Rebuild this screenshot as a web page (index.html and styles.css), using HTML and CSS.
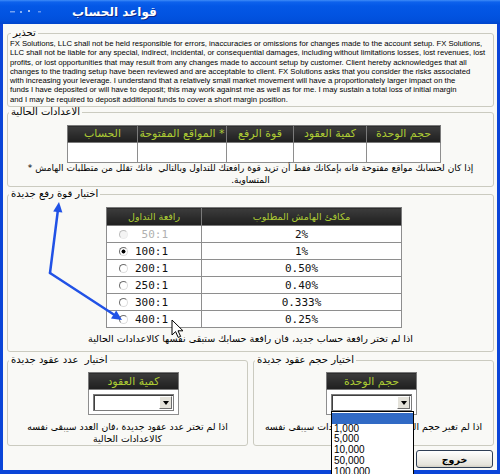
FILE: index.html
```html
<!DOCTYPE html>
<html lang="ar">
<head>
<meta charset="utf-8">
<title>قواعد الحساب</title>
<link rel="stylesheet" href="styles.css">
</head>
<body>
<div class="window">
  <div class="titlebar">
    <span class="app-icon">
      <svg width="36" height="8" viewBox="0 0 36 8"><rect x="2" y="3" width="5" height="1.5" fill="#8fb4f5"/><rect x="12" y="3" width="2" height="2" fill="#a9c6f7"/><rect x="20" y="2" width="2" height="2" fill="#c8dafa"/><rect x="30" y="3" width="3" height="1.5" fill="#7ea6f2"/></svg>
    </span>
    <span class="title">قواعد الحساب</span>
  </div>
  <div class="frame">
    <fieldset class="group warn">
      <legend>تحذير</legend>
      <p class="disclaimer">FX Solutions, LLC shall not be held responsible for errors, inaccuracies or omissions for changes made to the account setup. FX Solutions,<br>LLC shall not be liable for any special, indirect, incidental, or consequential damages, including without limitations losses, lost revenues, lost<br>profits, or lost opportunities that may result from any changes made to account setup by customer. Client hereby acknowledges that all<br>changes to the trading setup have been reviewed and are acceptable to client. FX Solutions asks that you consider the risks associated<br>with increasing your leverage. I understand that a relatively small market movement will have a proportionately larger impact on the<br>funds I have deposited or will have to deposit; this may work against me as well as for me. I may sustain a total loss of initial margin<br>and I may be required to deposit additional funds to cover a short margin position.</p>
    </fieldset>

    <fieldset class="group current">
      <legend>الاعدادات الحالية</legend>
      <table class="grid cur-table" dir="rtl">
        <tr class="head">
          <th class="w-unit">حجم الوحدة</th>
          <th class="w-qty">كمية العقود</th>
          <th class="w-lev">قوة الرفع</th>
          <th class="w-open">* المواقع المفتوحة</th>
          <th class="w-acc">الحساب</th>
        </tr>
        <tr class="cur-row"><td></td><td></td><td></td><td></td><td></td></tr>
      </table>
      <p class="note note-cur" dir="rtl">إذا كان لحسابك مواقع مفتوحة فانه بإمكانك فقط أن تزيد قوة رافعتك للتداول وبالتالي&nbsp; فانك تقلل من متطلبات الهامش *<br>المتساوية.</p>
    </fieldset>

    <fieldset class="group leverage">
      <legend>اختيار قوة رفع جديدة</legend>
      <table class="grid lev-table" dir="rtl">
        <tr class="head">
          <th class="w-margin">مكافئ الهامش المطلوب</th>
          <th class="w-ratio">رافعة التداول</th>
        </tr>
        <tr><td class="pct">2%</td><td class="ratio"><label class="opt off"><input type="radio" name="lev" disabled><span>&nbsp;50:1</span></label></td></tr>
        <tr><td class="pct">1%</td><td class="ratio"><label class="opt"><input type="radio" name="lev" checked><span>100:1</span></label></td></tr>
        <tr><td class="pct">0.50%</td><td class="ratio"><label class="opt"><input type="radio" name="lev"><span>200:1</span></label></td></tr>
        <tr><td class="pct">0.40%</td><td class="ratio"><label class="opt"><input type="radio" name="lev"><span>250:1</span></label></td></tr>
        <tr><td class="pct">0.333%</td><td class="ratio"><label class="opt"><input type="radio" name="lev"><span>300:1</span></label></td></tr>
        <tr><td class="pct">0.25%</td><td class="ratio"><label class="opt"><input type="radio" name="lev"><span>400:1</span></label></td></tr>
      </table>
      <p class="note note-lev" dir="rtl">اذا لم تختر رافعة حساب جديد، فان رافعة حسابك ستبقى نفسها كالاعدادات الحالية</p>
    </fieldset>

    <div class="bottom-row">
      <fieldset class="group small qty">
        <legend>اختيار&nbsp; عدد عقود جديدة</legend>
        <table class="grid pick-table" dir="rtl">
          <tr class="head"><th>كمية العقود</th></tr>
          <tr><td class="pick-cell"><div class="combo"><span class="combo-btn"></span></div></td></tr>
        </table>
        <p class="note" dir="rtl">اذا لم تختر عدد عقود جديدة ،فان العدد سيبقى نفسه<br>كالاعدادات الحالية</p>
      </fieldset>
      <fieldset class="group small unit">
        <legend>اختيار حجم عقود جديدة</legend>
        <table class="grid pick-table" dir="rtl">
          <tr class="head"><th>حجم الوحدة</th></tr>
          <tr><td class="pick-cell">
            <div class="combo open"><span class="combo-btn"></span>
              <ul class="combo-list">
                <li class="sel">&nbsp;</li>
                <li>1,000</li>
                <li>5,000</li>
                <li>10,000</li>
                <li>50,000</li>
                <li>100,000</li>
              </ul>
            </div>
          </td></tr>
        </table>
        <p class="note" dir="rtl">اذا لم تغير حجم الوحدة، فان حجم الوحدات سيبقى نفسه<br>كالاعدادات الحالية</p>
      </fieldset>
    </div>

    <div class="actions"><button class="btn" type="button">خروج</button></div>
  </div>

  <svg class="annot" width="500" height="474" viewBox="0 0 500 474">
    <g stroke="#2152E6" stroke-width="2.5" stroke-linecap="round" fill="none">
      <line x1="50" y1="273" x2="57.8" y2="211"/>
      <line x1="50" y1="273" x2="113" y2="314"/>
    </g>
    <g fill="#2152E6">
      <polygon points="59,202 62.4,212.6 53.2,211.4"/>
      <polygon points="122,320 111,318.4 116.2,310.6"/>
    </g>
  </svg>
  <svg class="cursor" width="14" height="20" viewBox="0 0 14 20">
    <path d="M1 1 L1 16 L4.6 12.6 L7.2 18.4 L9.6 17.4 L7 11.8 L12 11.8 Z" fill="#fff" stroke="#000" stroke-width="1" stroke-linejoin="miter"/>
  </svg>
</div>
</body>
</html>
```

FILE: styles.css
```css
* { box-sizing: border-box; }
html, body { margin: 0; padding: 0; }
body {
  width: 500px;
  height: 474px;
  overflow: hidden;
  background: #fff;
  font-family: "DejaVu Sans", sans-serif;
  color: #000;
}
.window {
  position: relative;
  width: 500px;
  height: 474px;
}
.titlebar {
  height: 24px;
  display: flex;
  align-items: center;
  padding-left: 8px;
  background: linear-gradient(#3F8CF7 0, #0E62EC 2px, #0458E6 6px, #0254E2 14px, #0150DC 20px, #0045CC 24px);
}
.app-icon { display: flex; width: 36px; height: 8px; opacity: .8; }
.title {
  margin-left: 28px;
  color: #fff;
  font-weight: bold;
  font-size: 12px;
  line-height: 14px;
  text-shadow: 1px 1px 0 #0a2a8a;
}
.frame {
  height: 450px;
  border: solid #0B45D8;
  border-width: 0 3px 4px 3px;
  background: #F9F9F6;
  padding: 4px 3px 0 4px;
  display: flex;
  flex-direction: column;
}
.group {
  margin: 0;
  min-width: 0;
  border: 1px solid #CBCBC0;
  border-radius: 3px;
  padding: 0;
}
.group legend {
  padding: 0 2px;
  margin-left: 1px;
  font-size: 10px;
  line-height: 10px;
  height: 10px;
  white-space: nowrap;
}
.warn { padding: 1px 0 2px 2px; }
.disclaimer {
  margin: 0;
  font-family: "Liberation Sans", Arial, sans-serif;
  font-size: 7.7px;
  line-height: 9.3px;
  white-space: nowrap;
}
.current { margin-top: 0; padding: 8px 0 0 0; }
.leverage { margin-top: 2px; padding: 8px 0 6px 0; }

.grid {
  border-collapse: collapse;
  border: 1px solid #6E6E6E;
}
.grid th {
  background: linear-gradient(#3C3C3C, #2A2A2A 60%, #1F1F1F);
  color: #ADCC34;
  font-weight: normal;
  border: 1px solid #7A7A7A;
  padding: 0;
  white-space: nowrap;
  text-align: center;
}
.grid td {
  background: #fff;
  border: 1px solid #8E8E8E;
  padding: 0;
}
.cur-table { margin: 0 52px 0 auto; }
.cur-table th { height: 17px; font-size: 11px; line-height: 14px; }
.cur-row td { height: 20px; }
.w-unit { width: 74px; }
.w-qty { width: 73px; }
.w-lev { width: 67px; }
.w-open { width: 89px; }
.w-acc { width: 70px; }

.note {
  margin: 0;
  text-align: center;
  font-size: 9px;
  line-height: 12px;
  white-space: nowrap;
}
.note-cur { line-height: 11.5px; }
.note-lev { margin-top: 5px; font-size: 9.6px; }

.lev-table { margin: 0 91px 0 auto; }
.lev-table th { height: 18px; font-size: 9.5px; }
.lev-table td { height: 17px; }
.w-margin { width: 200px; }
.w-ratio { width: 95px; }
.pct {
  text-align: center;
  font-family: "DejaVu Sans Mono", monospace;
  font-size: 11px;
  color: #111;
}
.ratio { direction: ltr; text-align: left; padding-left: 11px !important; }
.opt {
  display: flex;
  align-items: center;
  font-family: "DejaVu Sans Mono", monospace;
  font-size: 11px;
  color: #111;
}
.opt input {
  appearance: none;
  -webkit-appearance: none;
  width: 9px;
  height: 9px;
  margin: 0 7px 0 1px;
  border-radius: 50%;
  border: 1px solid;
  border-color: #6F6F6F #DCDCDC #DCDCDC #6F6F6F;
  background: #fff;
}
.opt input:checked {
  background: radial-gradient(circle, #000 0 1.7px, #fff 2.3px);
}
.opt.off { color: #B0B0B0; }
.opt.off input { border-color: #BDBDBD #ECECEC #ECECEC #BDBDBD; background: #F4F4F4; }

.bottom-row {
  display: flex;
  gap: 5px;
  margin-top: 3px;
}
.small { flex: 1; padding: 7px 0 0 0; }
.small .note { margin-top: 6px; font-size: 9.3px; }
.pick-table th { width: 90px; height: 17px; font-size: 11px; }
.qty .pick-table { margin-left: 80px; }
.unit .pick-table { margin-left: 72px; }
.pick-cell { height: 24px; padding: 4px 4px 3px 4px !important; }
.combo {
  position: relative;
  height: 17px;
  background: #fff;
  border: 1px solid #7C7C7C;
  box-shadow: inset 1px 1px 0 #3F3F3F;
}
.combo-btn {
  position: absolute;
  right: 1px;
  top: 1px;
  width: 13px;
  height: 13px;
  background: #E4E2DA;
  border: 1px solid;
  border-color: #fff #6E6E6E #6E6E6E #fff;
}
.combo-btn::after {
  content: "";
  position: absolute;
  left: 3px;
  top: 4px;
  border-style: solid;
  border-width: 4px 3px 0 3px;
  border-color: #000 transparent transparent transparent;
}
.combo-list {
  position: absolute;
  left: -1px;
  top: 16px;
  width: 83px;
  margin: 0;
  padding: 1px 0 0 0;
  list-style: none;
  background: #fff;
  border: 1px solid #000;
  z-index: 5;
  direction: ltr;
  text-align: left;
  font-family: "Liberation Sans", Arial, sans-serif;
  font-size: 10px;
  line-height: 10.7px;
}
.combo-list li { padding-left: 2px; height: 10.7px; }
.combo-list li.sel { background: #316AC5; }

.actions {
  display: flex;
  justify-content: flex-end;
  margin-top: 4px;
  padding-right: 1px;
}
.btn {
  width: 77px;
  height: 18px;
  padding: 0;
  border: 1px solid #2F3E55;
  border-radius: 3px;
  background: linear-gradient(#FFFFFF, #F3F2EE 40%, #E6E4DC 85%, #D3CFC4);
  font-family: "DejaVu Sans", sans-serif;
  font-weight: bold;
  font-size: 9.5px;
  color: #000;
}

.annot { position: absolute; left: 0; top: 0; pointer-events: none; z-index: 6; }
.cursor { position: absolute; left: 171px; top: 319px; pointer-events: none; z-index: 7; }
```
